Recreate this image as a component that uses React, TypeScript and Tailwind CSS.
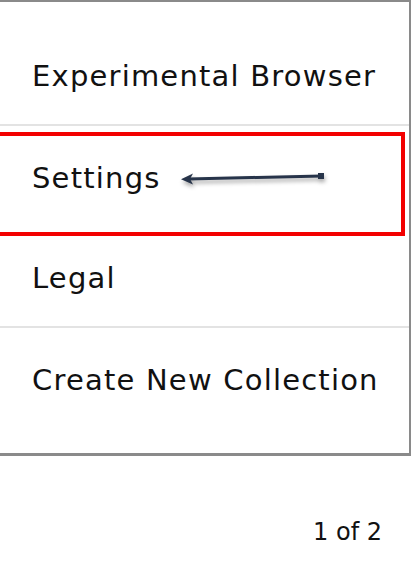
const items = [
  { label: "Experimental Browser", divider: true },
  { label: "Settings", divider: false },
  { label: "Legal", divider: true },
  { label: "Create New Collection", divider: false },
];

function Arrow() {
  return (
    <svg
      className="absolute left-[176px] top-[166px] drop-shadow-[1px_3px_2px_rgba(0,0,0,0.35)]"
      width="156"
      height="24"
      viewBox="0 0 156 24"
    >
      <line x1="12" y1="13" x2="146" y2="10" stroke="#27344a" strokeWidth="3" />
      <polygon points="5,13.2 17,7.5 14,13 17,18.5" fill="#27344a" />
      <rect x="142" y="7" width="6" height="6" fill="#27344a" />
    </svg>
  );
}

export default function App() {
  return (
    <div className="relative w-[412px] h-[573px] overflow-hidden bg-white text-[#111] font-['DejaVu_Sans','Open_Sans',sans-serif]">
      <div className="w-[411px] border-t-2 border-r-2 border-b-[3px] border-[#8a8a8a] pt-[23px] pb-[24px]">
        {items.map((item) => (
          <div
            key={item.label}
            className={
              item.divider
                ? "h-[101px] flex items-center pl-[32px] pt-[4px] text-[29px] tracking-[1.2px] border-b-2 border-[#e3e3e3]"
                : "h-[101px] flex items-center pl-[32px] pt-[4px] text-[29px] tracking-[1.2px]"
            }
          >
            {item.label}
          </div>
        ))}
      </div>

      <div className="flex justify-end pr-[30px] pt-[58px] text-[24px]">1 of 2</div>

      {/* annotation */}
      <div className="absolute left-[-4px] top-[132px] w-[409px] h-[104px] border-4 border-[#f30000]" />
      <Arrow />
    </div>
  );
}
